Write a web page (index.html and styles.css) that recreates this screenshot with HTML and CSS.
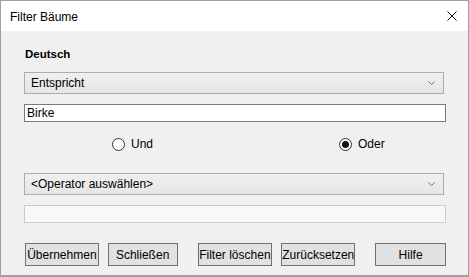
FILE: index.html
```html
<!DOCTYPE html>
<html lang="de">
<head>
  <meta charset="UTF-8">
  <meta name="viewport" content="width=device-width, initial-scale=1.0">
  <title>Filter Bäume</title>
  <link rel="stylesheet" href="styles.css">
</head>
<body>
  <div class="window">
    <div class="titlebar">
      <span class="title">Filter Bäume</span>
      <svg class="close" width="10" height="10" viewBox="0 0 10 10">
        <path d="M0.5 0.5 L9.5 9.5 M9.5 0.5 L0.5 9.5" stroke="#111" stroke-width="1" fill="none"/>
      </svg>
    </div>

    <div class="content">
      <div class="field-label">Deutsch</div>

      <div class="combo combo-first">
        <span>Entspricht</span>
        <svg class="chevron" width="7" height="4" viewBox="0 0 7 4">
          <path d="M0.5 0.5 L3.5 3.5 L6.5 0.5" stroke="#707070" stroke-width="1" fill="none"/>
        </svg>
      </div>

      <input class="textbox" type="text" value="Birke">

      <div class="radios">
        <label class="radio radio-und">
          <span class="circle"></span>
          <span>Und</span>
        </label>
        <label class="radio radio-oder">
          <span class="circle checked"></span>
          <span>Oder</span>
        </label>
      </div>

      <div class="combo combo-second">
        <span>&lt;Operator auswählen&gt;</span>
        <svg class="chevron" width="7" height="4" viewBox="0 0 7 4">
          <path d="M0.5 0.5 L3.5 3.5 L6.5 0.5" stroke="#707070" stroke-width="1" fill="none"/>
        </svg>
      </div>

      <input class="textbox disabled" type="text" disabled>

      <div class="buttons">
        <button class="btn btn-apply">Übernehmen</button>
        <button class="btn btn-close">Schließen</button>
        <button class="btn btn-clear">Filter löschen</button>
        <button class="btn btn-reset">Zurücksetzen</button>
        <button class="btn btn-help">Hilfe</button>
      </div>
    </div>
  </div>
</body>
</html>
```

FILE: styles.css
```css
* {
  box-sizing: border-box;
}
body {
  margin: 0;
  font-family: "Liberation Sans", Arial, sans-serif;
  font-size: 12px;
  color: #000;
}
.window {
  width: 469px;
  height: 277px;
  border: 1px solid #a0a0a0;
  border-bottom-width: 2px;
  background-color: #f0f0f0;
  display: flex;
  flex-direction: column;
}
.titlebar {
  height: 30px;
  background-color: #fff;
  display: flex;
  align-items: center;
  justify-content: space-between;
  padding: 0 11px 0 9px;
}
.title {
  font-size: 12px;
  padding-top: 1px;
}
.content {
  padding: 15px 22px 0 23px;
  display: flex;
  flex-direction: column;
}
.field-label {
  font-weight: bold;
  font-size: 11.5px;
  line-height: 16px;
  padding-left: 1px;
}
.combo {
  height: 22px;
  margin-right: 2px;
  border: 1px solid #adadad;
  background: linear-gradient(#efefef, #e6e6e6);
  display: flex;
  align-items: center;
  justify-content: space-between;
  padding: 0 8px 0 6px;
}
.combo-first {
  margin-top: 10px;
}
.combo-second {
  margin-top: 19px;
}
.chevron {
  display: block;
}
.textbox {
  height: 18px;
  margin: 10px 0 0 0;
  border: 1px solid #7a7a7a;
  background-color: #fff;
  font-family: "Liberation Sans", Arial, sans-serif;
  font-size: 12px;
  color: #000;
  padding: 0 2px;
  outline: none;
}
.textbox.disabled {
  border-color: #cccccc;
  background-color: #f8f8f8;
}
.radios {
  height: 20px;
  margin-top: 12px;
  display: flex;
  align-items: center;
}
.radio {
  display: flex;
  align-items: center;
  gap: 6px;
}
.radio-und {
  margin-left: 88px;
}
.radio-oder {
  margin-left: 186px;
}
.circle {
  width: 13px;
  height: 13px;
  border: 1px solid #333;
  border-radius: 50%;
  background-color: #fff;
  display: flex;
  align-items: center;
  justify-content: center;
}
.circle.checked::after {
  content: "";
  width: 7px;
  height: 7px;
  border-radius: 50%;
  background-color: #111;
}
.buttons {
  margin-top: 20px;
  display: flex;
}
.btn {
  height: 23px;
  padding: 0;
  border: 1px solid #707070;
  background-color: #e1e1e1;
  font-family: "Liberation Sans", Arial, sans-serif;
  font-size: 12px;
  color: #000;
}
.btn-apply {
  width: 74px;
  margin-left: 1px;
}
.btn-close {
  width: 70px;
  margin-left: 9px;
}
.btn-clear {
  width: 75px;
  margin-left: 20px;
}
.btn-reset {
  width: 74px;
  margin-left: 9px;
}
.btn-help {
  width: 71px;
  margin-left: 20px;
}
```
